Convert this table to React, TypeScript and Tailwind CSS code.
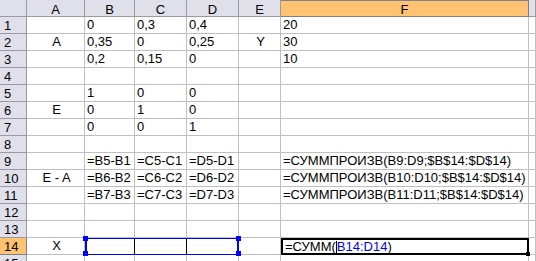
import React from 'react';

type Row = { a?: string; b?: string; c?: string; d?: string; e?: string; f?: string };

const ROWS: Row[] = [
  { b: '0', c: '0,3', d: '0,4', f: '20' },
  { a: 'A', b: '0,35', c: '0', d: '0,25', e: 'Y', f: '30' },
  { b: '0,2', c: '0,15', d: '0', f: '10' },
  {},
  { b: '1', c: '0', d: '0' },
  { a: 'E', b: '0', c: '1', d: '0' },
  { b: '0', c: '0', d: '1' },
  {},
  { b: '=B5-B1', c: '=C5-C1', d: '=D5-D1', f: '=СУММПРОИЗВ(B9:D9;$B$14:$D$14)' },
  { a: 'E - A', b: '=B6-B2', c: '=C6-C2', d: '=D6-D2', f: '=СУММПРОИЗВ(B10:D10;$B$14:$D$14)' },
  { b: '=B7-B3', c: '=C7-C3', d: '=D7-D3', f: '=СУММПРОИЗВ(B11:D11;$B$14:$D$14)' },
  {},
  {},
];

const COLS = ['A', 'B', 'C', 'D', 'E'];

const cell = 'border-r border-b border-[#c0c0c0] pl-[2px] leading-[16px] whitespace-nowrap';
const head = 'border-r border-b border-[#9a9aa6] bg-[#e0e0ea] leading-[16px] whitespace-nowrap';

const Handle = ({ pos }: { pos: string }) => (
  <div className={`absolute w-[5px] h-[5px] bg-[#0000ff] ${pos}`} />
);

export default function App() {
  return (
    <div className="w-[536px] h-[261px] overflow-hidden bg-white text-black font-['Liberation_Sans',Arial,sans-serif] text-[13px]">
      <div className="grid grid-cols-[27px_58px_50px_52px_52px_42px_248px_7px] auto-rows-[17px]">
        {/* column headers */}
        <div className={head} />
        {COLS.map((c) => (
          <div key={c} className={`${head} text-center pt-[2px]`}>{c}</div>
        ))}
        <div className="border-r border-b border-t border-[#80808c] bg-[#ffc372] text-center leading-[16px] pt-[1px]">F</div>
        <div className={head} />

        {/* rows 1-13 */}
        {ROWS.map((r, i) => (
          <React.Fragment key={i}>
            <div className={`${head} pl-[4px] pt-[1px]`}>{i + 1}</div>
            <div className={`${cell} text-center`}>{r.a}</div>
            <div className={cell}>{r.b}</div>
            <div className={cell}>{r.c}</div>
            <div className={cell}>{r.d}</div>
            <div className={`${cell} text-center`}>{r.e}</div>
            <div className={cell}>{r.f}</div>
            <div className={cell} />
          </React.Fragment>
        ))}

        {/* row 14 */}
        <div className="border-r border-b border-[#80808c] bg-[#ffc372] pl-[4px] pt-[1px] leading-[16px]">14</div>
        <div className={`${cell} text-center`}>X</div>
        <div className="col-span-3 relative flex border-b border-[#c0c0c0]">
          <div className="w-[50px] border-r border-black" />
          <div className="w-[52px] border-r border-black" />
          <div className="w-[52px] border-r border-[#c0c0c0]" />
          <div className="absolute left-0 top-0 w-[154px] h-[17px] border-[#0000ff] border-y border-x-2" />
          <Handle pos="left-[-2px] top-[-2px]" />
          <Handle pos="left-[-2px] bottom-[-2px]" />
          <Handle pos="right-[-2px] top-[-2px]" />
          <Handle pos="right-[-2px] bottom-[-2px]" />
        </div>
        <div className={cell} />
        <div className="relative border-2 border-black pl-[2px] leading-[13px] whitespace-nowrap">
          <span>=СУММ(</span>
          <span className="inline-block w-px h-[12px] bg-black align-[-2px]" />
          <span className="text-[#0000ff]">B14:D14</span>
          <span>)</span>
          <div className="absolute right-[-3px] bottom-[-3px] w-[4px] h-[4px] bg-black" />
        </div>
        <div className={cell} />

        {/* row 15 (cut off) */}
        <div className={`${head} pl-[4px] pt-[1px]`}>15</div>
        <div className={cell} />
        <div className={cell} />
        <div className={cell} />
        <div className={cell} />
        <div className={cell} />
        <div className={cell} />
        <div className={cell} />
      </div>
    </div>
  );
}
